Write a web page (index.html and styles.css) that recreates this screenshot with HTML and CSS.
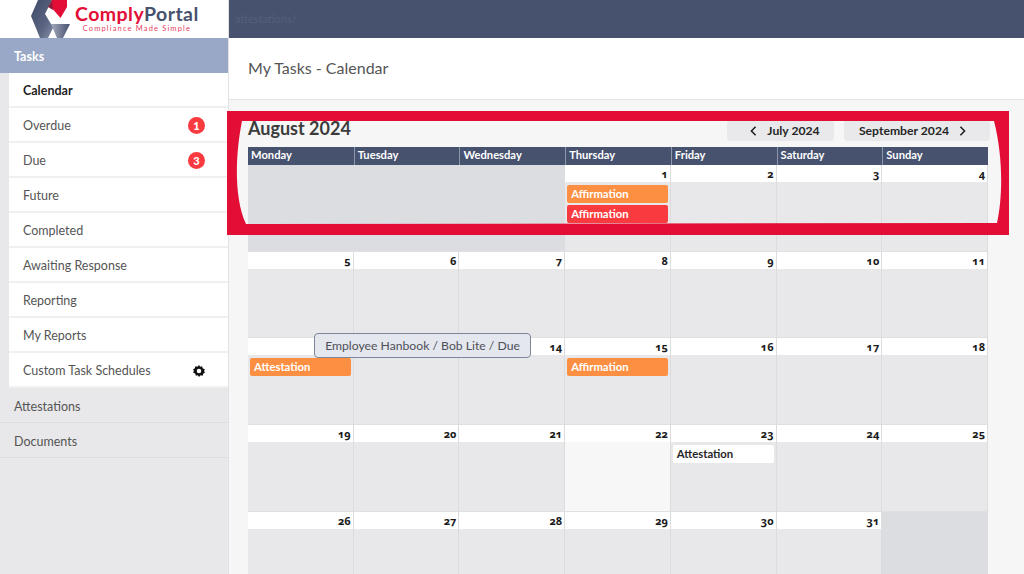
FILE: index.html
```html
<!DOCTYPE html>
<html lang="en">
<head>
<meta charset="utf-8">
<title>My Tasks - Calendar</title>
<link rel="stylesheet" href="styles.css">
</head>
<body>
<div class="app">
  <aside class="sidebar">
    <div class="logo">
      <svg class="logo-mark" viewBox="0 0 40 38" width="40" height="38" aria-hidden="true">
        <defs>
          <linearGradient id="g1" x1="0" y1="0" x2="1" y2="1"><stop offset="0" stop-color="#3f4a68"/><stop offset=".6" stop-color="#5a6480"/><stop offset="1" stop-color="#8a93aa"/></linearGradient>
          <linearGradient id="g2" x1="0" y1="0" x2="1" y2="0"><stop offset="0" stop-color="#a4abbd"/><stop offset="1" stop-color="#47516e"/></linearGradient>
        </defs>
        <path d="M8 0H22L15 14 21 24H25L18 38H10L1 16Z" fill="url(#g1)"/>
        <path d="M21 24H40L33 38H27Z" fill="url(#g2)"/>
        <path d="M22 0H37V7L30.500 18 20 6Z" fill="#e30e36"/>
        <path d="M22 0 18 7 23 10Z" fill="#8f1d3a"/>
      </svg>
      <div class="logo-text">
        <div class="logo-name"><span class="logo-red">Comply</span><span class="logo-slate">Portal</span></div>
        <div class="logo-tag">Compliance Made Simple</div>
      </div>
    </div>
    <div class="side-head">Tasks</div>
    <nav class="side-sub">
      <a class="side-item active">Calendar</a>
      <a class="side-item">Overdue<span class="badge">1</span></a>
      <a class="side-item">Due<span class="badge">3</span></a>
      <a class="side-item">Future</a>
      <a class="side-item">Completed</a>
      <a class="side-item">Awaiting Response</a>
      <a class="side-item">Reporting</a>
      <a class="side-item">My Reports</a>
      <a class="side-item">Custom Task Schedules
        <svg class="gear" viewBox="0 0 24 24" width="12" height="12" aria-hidden="true"><path fill-rule="evenodd" d="M12 0l2.200 3.600 4.100-1 1 4.100L24 9l-2 3 2 3-3.700 2.300-1 4.100-4.100-1L12 24l-2.200-3.600-4.100 1-1-4.100L0 15l2-3-2-3 3.700-2.300 1-4.100 4.100 1zM12 7.500a4.500 4.500 0 1 0 0 9 4.500 4.500 0 0 0 0-9z" fill="#111"/></svg>
      </a>
    </nav>
    <a class="side-top">Attestations</a>
    <a class="side-top">Documents</a>
  </aside>

  <main class="main">
    <div class="topbar"><span class="crumb">attestations/</span></div>
    <div class="page-head"><h1>My Tasks - Calendar</h1></div>
    <section class="content">
      <div class="cal-head">
        <h2>August 2024</h2>
        <div class="cal-nav">
          <a class="nav-btn nav-prev"><svg viewBox="0 0 8 12" width="7" height="10" aria-hidden="true"><path d="M6.500 1 1.500 6l5 5" fill="none" stroke="#1c1c1c" stroke-width="1.800"/></svg>July 2024</a>
          <a class="nav-btn nav-next">September 2024<svg viewBox="0 0 8 12" width="7" height="10" aria-hidden="true"><path d="M1.500 1l5 5-5 5" fill="none" stroke="#1c1c1c" stroke-width="1.800"/></svg></a>
        </div>
      </div>
      <div class="cal-grid">
        <div class="dow">Monday</div><div class="dow">Tuesday</div><div class="dow">Wednesday</div><div class="dow">Thursday</div><div class="dow">Friday</div><div class="dow">Saturday</div><div class="dow">Sunday</div>

        <div class="day blank"></div><div class="day blank"></div><div class="day blank"></div>
        <div class="day"><div class="num">1</div><div class="ev orange">Affirmation</div><div class="ev red">Affirmation</div></div>
        <div class="day"><div class="num">2</div></div>
        <div class="day"><div class="num">3</div></div>
        <div class="day"><div class="num">4</div></div>

        <div class="day"><div class="num">5</div></div>
        <div class="day"><div class="num">6</div></div>
        <div class="day"><div class="num">7</div></div>
        <div class="day"><div class="num">8</div></div>
        <div class="day"><div class="num">9</div></div>
        <div class="day"><div class="num">10</div></div>
        <div class="day"><div class="num">11</div></div>

        <div class="day"><div class="num"></div><div class="ev orange">Attestation</div></div>
        <div class="day"><div class="num"></div></div>
        <div class="day"><div class="num">14</div></div>
        <div class="day"><div class="num">15</div><div class="ev orange">Affirmation</div></div>
        <div class="day"><div class="num">16</div></div>
        <div class="day"><div class="num">17</div></div>
        <div class="day"><div class="num">18</div></div>

        <div class="day"><div class="num">19</div></div>
        <div class="day"><div class="num">20</div></div>
        <div class="day"><div class="num">21</div></div>
        <div class="day today"><div class="num">22</div></div>
        <div class="day"><div class="num">23</div><div class="ev white">Attestation</div></div>
        <div class="day"><div class="num">24</div></div>
        <div class="day"><div class="num">25</div></div>

        <div class="day"><div class="num">26</div></div>
        <div class="day"><div class="num">27</div></div>
        <div class="day"><div class="num">28</div></div>
        <div class="day"><div class="num">29</div></div>
        <div class="day"><div class="num">30</div></div>
        <div class="day"><div class="num">31</div></div>
        <div class="day blank"></div>
      </div>
    </section>
  </main>
</div>
<div class="tooltip">Employee Hanbook / Bob Lite / Due</div>
<svg class="annotation" viewBox="0 0 782 124" width="782" height="124" aria-hidden="true">
  <path fill="#e30e36" fill-rule="evenodd" d="M0 0H782V124H0ZM15 10C9 40 6 85 19 113L770 112C776 85 776 45 767 10Z"/>
</svg>
</body>
</html>
```

FILE: styles.css
```css
* { box-sizing: border-box; }
html, body { margin: 0; height: 100%; overflow: hidden; }
body {
  font-family: Lato, "Open Sans", sans-serif;
  font-size: 12px;
  color: #333;
  background: #f6f6f6;
  position: relative;
}
.app { display: flex; height: 574px; overflow: hidden; }

/* Sidebar */
.sidebar { width: 229px; flex: none; background: #e8e8ea; border-right: 1px solid #e2e2e4; }
.logo { height: 38px; background: #fff; display: flex; padding-left: 30px; gap: 5px; overflow: hidden; }
.logo-mark { flex: none; }
.logo-text { display: flex; flex-direction: column; align-items: center; padding-top: 3px; }
.logo-name { font-size: 19.500px; line-height: 21px; font-weight: 700; letter-spacing: .45px; white-space: nowrap; }
.logo-red { color: #e30e36; }
.logo-slate { color: #47526f; }
.logo-tag { font-size: 7.500px; line-height: 9px; letter-spacing: 1.150px; color: #e8405f; white-space: nowrap; }
.side-head { height: 35px; background: #9aa8c7; color: #fff; font-weight: 700; font-size: 12.500px; display: flex; align-items: center; padding: 2px 0 0 14px; }
.side-sub { padding-left: 9px; }
.side-item {
  height: 35px; background: #fff; border-bottom: 2px solid #f0f0f1;
  display: flex; align-items: center; justify-content: space-between;
  padding: 2px 23px 0 14px; font-size: 12.500px; color: #555;
}
.side-item.active { color: #1f1f1f; font-weight: 700; }
.badge {
  width: 17px; height: 17px; border-radius: 50%; background: #f93a3e; color: #fff;
  font-size: 11px; font-weight: 900; display: flex; align-items: center; justify-content: center;
}
.side-top { height: 35px; display: flex; align-items: center; padding: 2px 0 0 14px; font-size: 12.500px; color: #555; border-bottom: 1px solid #dedee0; }

/* Main */
.main { flex: 1; min-width: 0; }
.topbar { height: 38px; background: #47526f; padding: 12px 0 0 6px; }
.crumb { font-size: 11px; color: #566079; line-height: 14px; display: block; }
.page-head { height: 62px; background: #fff; border-bottom: 1px solid #e4e4e4; padding: 20px 0 0 19px; }
.page-head h1 { margin: 0; font-size: 16px; line-height: 20px; font-weight: 400; color: #555; }
.content { padding: 20px 0 0 19px; width: 760px; }
.cal-head { display: flex; justify-content: space-between; height: 27px; width: 742px; }
.cal-head h2 { margin: 0; font-size: 18px; line-height: 17px; font-weight: 700; color: #3c3c3c; }
.cal-nav { display: flex; gap: 10px; height: 21px; }
.nav-btn {
  display: flex; align-items: center; justify-content: center; gap: 10px;
  height: 21px; background: #e9e9eb; border-radius: 4px;
  font-size: 12.200px; font-weight: 700; color: #262626;
}
.nav-prev { width: 107px; padding-left: 9px; }
.nav-next { width: 146px; padding-right: 9px; }
.cal-grid {
  width: 740px;
  display: grid;
  grid-template-columns: repeat(7, 1fr);
  grid-template-rows: 18px repeat(5, 86.700px);
}
.dow {
  background: #47526f; color: #fff; font-weight: 700; font-size: 11.200px;
  padding: 1px 3px; line-height: 14px; border-left: 1px solid #8d96ab;
}
.dow:first-child { border-left: 0; }
.day { background: #e8e8ea; border-right: 1px solid #dcdcde; border-bottom: 1px solid #e0e0e2; }
.day.blank { background: #dcdde0; border-right: 0; }
.day.today { background: #f7f7f7; }
.num {
  height: 17px; background: #fff; text-align: right; padding: 0 2px 0 0;
  font-family: "Open Sans", Lato, sans-serif;
  font-weight: 700; font-size: 11px; line-height: 17px; color: #1a1a1a;
  font-feature-settings: "onum";
}
.ev {
  margin: 2.600px 2px 0; height: 18px; border-radius: 2px; padding-left: 4px;
  font-weight: 700; font-size: 11.300px; line-height: 18px; color: #fff;
}
.ev + .ev { margin-top: 2px; }
.orange { background: #fd8f42; }
.red { background: #f93a3e; }
.white { background: #fff; color: #262626; }

/* Overlays */
.tooltip {
  position: absolute; left: 314px; top: 333px; width: 217px; height: 25px;
  background: #e4e7ed; border: 1px solid #7d8598; border-radius: 4px;
  font-size: 12.200px; line-height: 23px; text-align: center; color: #4f4f5a;
}
.annotation { position: absolute; left: 227px; top: 111px; }
```
